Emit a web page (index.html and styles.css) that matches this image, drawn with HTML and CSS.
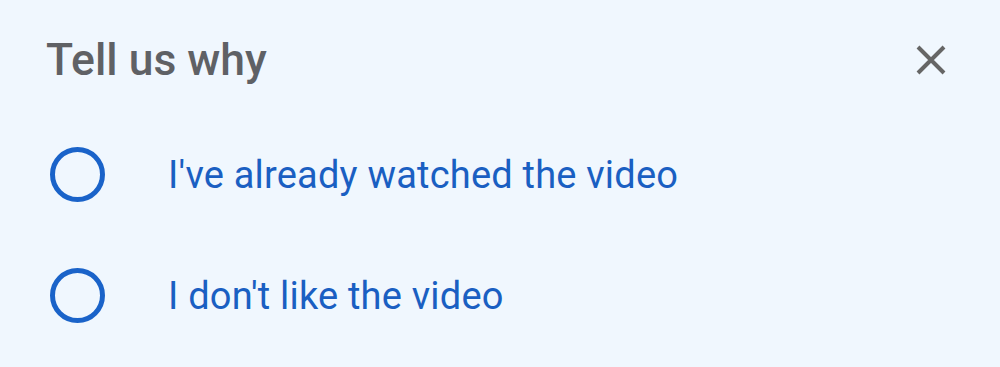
FILE: index.html
```html
<!DOCTYPE html>
<html>
<head>
<meta charset="utf-8">
<link rel="stylesheet" href="styles.css">
</head>
<body>
<div class="sheet">
  <div class="header">
    <h1 class="title">Tell us why</h1>
    <button class="close" aria-label="Close">
      <svg width="30" height="30" viewBox="0 0 30 30"><path d="M2 2 L28 28 M28 2 L2 28" stroke="#666666" stroke-width="4" fill="none"/></svg>
    </button>
  </div>
  <div class="options">
    <label class="option"><span class="radio"></span><span class="label">I've already watched the video</span></label>
    <label class="option"><span class="radio"></span><span class="label">I don't like the video</span></label>
  </div>
</div>
</body>
</html>
```
FILE: styles.css
```css
html, body {
  margin: 0;
  padding: 0;
  background: #f0f7fe;
}
body {
  font-family: Roboto, "Noto Sans", sans-serif;
  width: 1000px;
  height: 367px;
  overflow: hidden;
}
.sheet {
  display: flex;
  flex-direction: column;
}
.header {
  display: flex;
  align-items: center;
  justify-content: space-between;
  padding: 33px 54px 0 46px;
  height: 54px;
}
.title {
  margin: 0;
  font-size: 44.5px;
  font-weight: 500;
  line-height: 54px;
  color: #5f6165;
}
.close {
  border: none;
  background: none;
  padding: 0;
  width: 30px;
  height: 30px;
  display: flex;
}
.options {
  display: flex;
  flex-direction: column;
  padding-top: 27px;
}
.option {
  display: flex;
  align-items: center;
  height: 121px;
  padding-left: 50px;
}
.radio {
  box-sizing: border-box;
  width: 55px;
  height: 55px;
  border: 5px solid #1a63c9;
  border-radius: 50%;
  flex: none;
}
.label {
  margin-left: 63px;
  font-size: 38px;
  letter-spacing: 0.2px;
  color: #1a5fc2;
}
```
